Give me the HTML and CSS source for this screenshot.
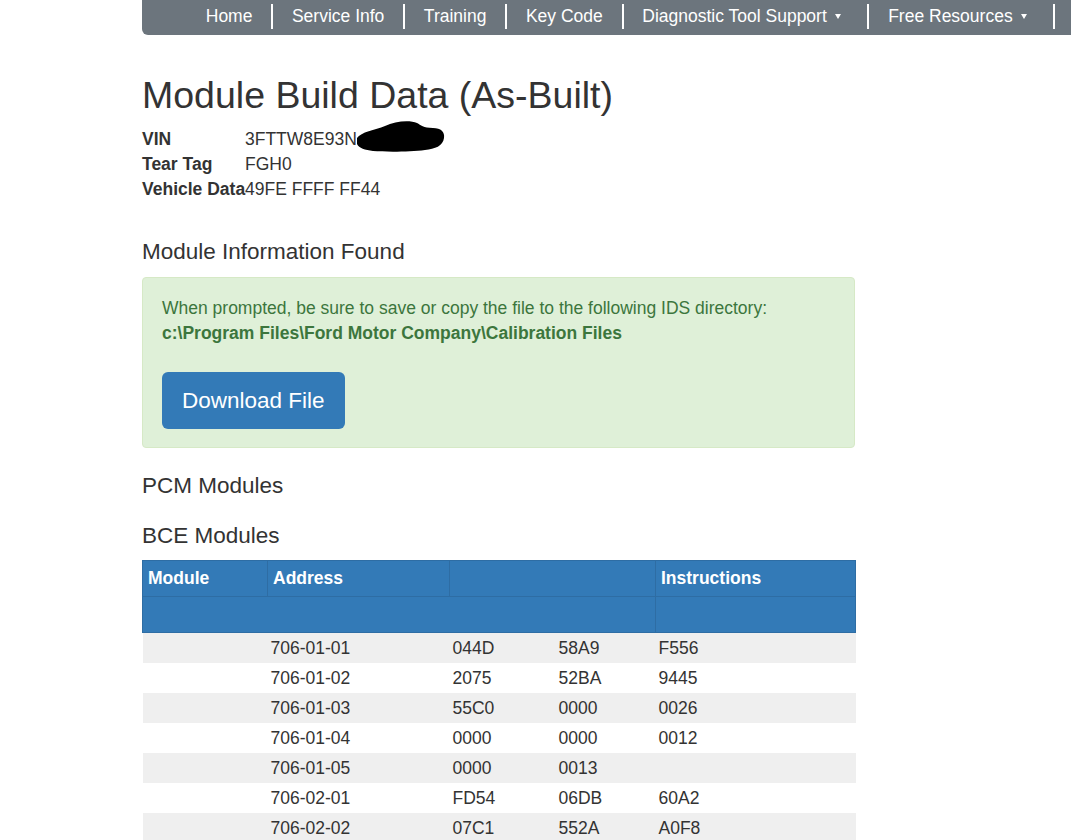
FILE: index.html
```html
<!DOCTYPE html>
<html lang="en">
<head>
    <meta charset="UTF-8">
    <meta name="viewport" content="width=device-width, initial-scale=1.0">
    <title>Module Build Data (As-Built)</title>
    <link rel="stylesheet" href="styles.css">
</head>
<body>
    <nav class="topnav">
        <ul>
            <li><a href="#">Home</a></li>
            <li><a href="#">Service Info</a></li>
            <li><a href="#">Training</a></li>
            <li><a href="#">Key Code</a></li>
            <li><a href="#">Diagnostic Tool Support <span class="caret"></span></a></li>
            <li><a href="#">Free Resources <span class="caret"></span></a></li>
        </ul>
    </nav>

    <div class="container">
        <h1>Module Build Data (As-Built)</h1>

        <div class="vehicle">
            <div class="label">VIN</div>
            <div class="value vin">3FTTW8E93N
                <svg class="redact" width="90" height="32" viewBox="0 0 90 32">
                    <path d="M2 18 C6 12 20 10 30 6 C40 1 55 0 62 3 C66 5 68 8 78 8 C86 8 90 12 89 18 C88 26 80 29 70 30 C55 32 30 32 18 31 C10 30 4 28 2 24 Z" fill="#000"/>
                </svg>
            </div>
            <div class="label">Tear Tag</div>
            <div class="value">FGH0</div>
            <div class="label">Vehicle Data</div>
            <div class="value">49FE FFFF FF44</div>
        </div>

        <h3>Module Information Found</h3>
        <div class="alert">
            <p>When prompted, be sure to save or copy the file to the following IDS directory:<br>
            <strong>c:\Program Files\Ford Motor Company\Calibration Files</strong></p>
            <a href="#" class="btn">Download File</a>
        </div>

        <h3 class="section">PCM Modules</h3>
        <h3 class="section">BCE Modules</h3>

        <table class="modules">
            <colgroup>
                <col style="width: 125px">
                <col style="width: 182px">
                <col style="width: 106px">
                <col style="width: 100px">
                <col style="width: 200px">
            </colgroup>
            <thead>
                <tr>
                    <th>Module</th>
                    <th>Address</th>
                    <th colspan="2"></th>
                    <th>Instructions</th>
                </tr>
                <tr class="sub">
                    <th colspan="4"></th>
                    <th></th>
                </tr>
            </thead>
            <tbody>
                <tr><td></td><td>706-01-01</td><td>044D</td><td>58A9</td><td>F556</td></tr>
                <tr><td></td><td>706-01-02</td><td>2075</td><td>52BA</td><td>9445</td></tr>
                <tr><td></td><td>706-01-03</td><td>55C0</td><td>0000</td><td>0026</td></tr>
                <tr><td></td><td>706-01-04</td><td>0000</td><td>0000</td><td>0012</td></tr>
                <tr><td></td><td>706-01-05</td><td>0000</td><td>0013</td><td></td></tr>
                <tr><td></td><td>706-02-01</td><td>FD54</td><td>06DB</td><td>60A2</td></tr>
                <tr><td></td><td>706-02-02</td><td>07C1</td><td>552A</td><td>A0F8</td></tr>
            </tbody>
        </table>
    </div>
</body>
</html>
```

FILE: styles.css
```css
body {
    font-family: "Liberation Sans", Arial, sans-serif;
    font-size: 17.5px;
    line-height: 25px;
    color: #333;
    margin: 0;
    background: #fff;
}
.topnav {
    margin-left: 142px;
    background: #6c757d;
    border-bottom-left-radius: 6px;
    height: 35px;
}
.topnav ul {
    list-style: none;
    margin: 0;
    padding: 4px 0 0 45px;
    display: flex;
    white-space: nowrap;
}
.topnav a {
    display: block;
    color: #fff;
    text-decoration: none;
    font-size: 17.5px;
    line-height: 25px;
    padding: 0 18.75px;
    border-right: 2px solid #fff;
}
.caret {
    display: inline-block;
    width: 0;
    height: 0;
    margin: 0 8px 0 3px;
    vertical-align: 3px;
    border-top: 5px solid #fff;
    border-left: 3px solid transparent;
    border-right: 3px solid transparent;
}
.container {
    margin-left: 142px;
    width: 713px;
}
h1 {
    font-size: 37.5px;
    font-weight: normal;
    line-height: 1.1;
    margin: 40px 0 11px;
}
h3 {
    font-size: 22.5px;
    font-weight: normal;
    line-height: 1.1;
    margin: 38px 0 12px;
}
.vehicle {
    display: grid;
    grid-template-columns: 103px 1fr;
}
.vehicle .label {
    font-weight: bold;
    white-space: nowrap;
}
.vin {
    position: relative;
}
.redact {
    position: absolute;
    left: 110px;
    top: -7px;
}
.alert {
    background: #dff0d8;
    border: 1px solid #d6e9c6;
    border-radius: 4px;
    color: #3c763d;
    padding: 18px 19px 18px;
}
.alert p {
    margin: 0 0 26px;
}
.btn {
    display: inline-block;
    background: #337ab7;
    color: #fff;
    font-size: 22.5px;
    line-height: 29px;
    padding: 14px 20px;
    border-radius: 6px;
    text-decoration: none;
}
h3.section {
    margin: 26px 0 0;
}
h3.section + h3.section {
    margin: 25px 0 11px;
}
.modules {
    border-collapse: collapse;
    table-layout: fixed;
    width: 713px;
}
.modules th {
    background: #337ab7;
    color: #fff;
    text-align: left;
    font-weight: bold;
    border: 1px solid #2e6da4;
    padding: 5px;
    height: 24px;
}
.modules .sub th {
    height: 23px;
    padding: 6px 5px;
}
.modules td {
    padding: 3px 3px;
    line-height: 24px;
}
.modules tbody tr:nth-child(odd) {
    background: #efefef;
}
```
